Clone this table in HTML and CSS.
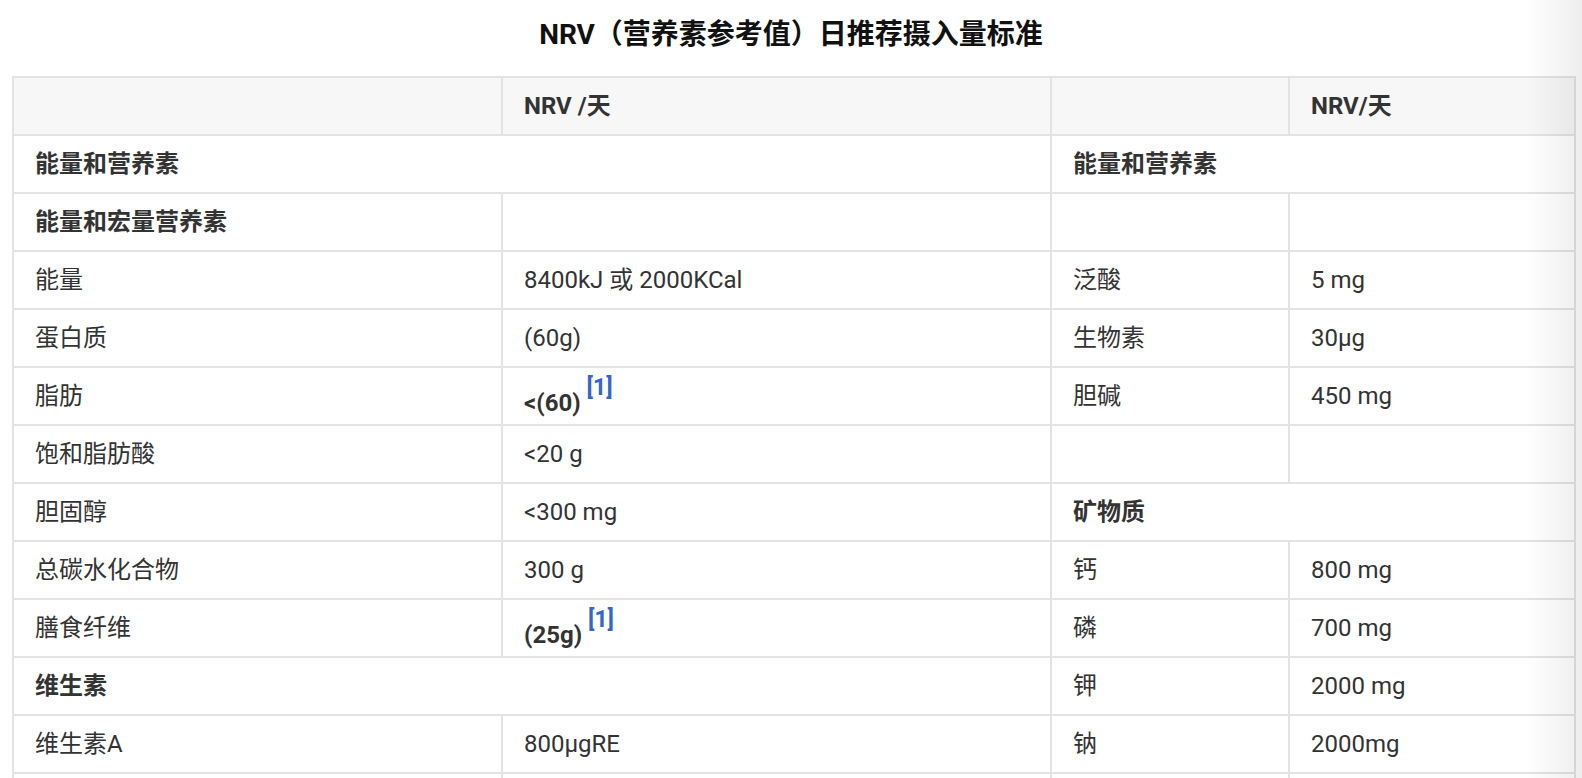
FILE: index.html
```html
<!DOCTYPE html>
<html lang="zh">
<head>
<meta charset="utf-8">
<title>NRV</title>
<link rel="stylesheet" href="styles.css">
</head>
<body>
<div class="page">
  <h1 class="title">NRV（营养素参考值）日推荐摄入量标准</h1>
  <table class="nrv">
    <colgroup>
      <col class="c1"><col class="c2"><col class="c3"><col class="c4">
    </colgroup>
    <thead>
      <tr><th></th><th>NRV /天</th><th></th><th>NRV/天</th></tr>
    </thead>
    <tbody>
      <tr><td class="b" colspan="2">能量和营养素</td><td class="b" colspan="2">能量和营养素</td></tr>
      <tr><td class="b">能量和宏量营养素</td><td></td><td></td><td></td></tr>
      <tr><td>能量</td><td>8400kJ 或 2000KCal</td><td>泛酸</td><td>5 mg</td></tr>
      <tr><td>蛋白质</td><td>(60g)</td><td>生物素</td><td>30μg</td></tr>
      <tr><td>脂肪</td><td class="b">&lt;(60) <sup class="ref">[1]</sup></td><td>胆碱</td><td>450 mg</td></tr>
      <tr><td>饱和脂肪酸</td><td>&lt;20 g</td><td></td><td></td></tr>
      <tr><td>胆固醇</td><td>&lt;300 mg</td><td class="b" colspan="2">矿物质</td></tr>
      <tr><td>总碳水化合物</td><td>300 g</td><td>钙</td><td>800 mg</td></tr>
      <tr><td>膳食纤维</td><td class="b">(25g) <sup class="ref">[1]</sup></td><td>磷</td><td>700 mg</td></tr>
      <tr><td class="b" colspan="2">维生素</td><td>钾</td><td>2000 mg</td></tr>
      <tr><td>维生素A</td><td>800μgRE</td><td>钠</td><td>2000mg</td></tr>
      <tr><td></td><td></td><td></td><td></td></tr>
    </tbody>
  </table>
</div>
</body>
</html>
```

FILE: styles.css
```css
html, body {
  margin: 0;
  padding: 0;
  background: #ffffff;
}

body {
  font-family: Roboto, "Noto Sans CJK SC", sans-serif;
  color: #333333;
  overflow: hidden;
}

body::after {
  content: "";
  position: fixed;
  top: 0;
  right: 0;
  width: 56px;
  height: 100%;
  background: linear-gradient(to right, rgba(0, 0, 0, 0), rgba(0, 0, 0, 0.065));
  pointer-events: none;
}

.page {
  padding-top: 18px;
}

.title {
  margin: 0 0 24px;
  font-size: 28px;
  line-height: 34px;
  font-weight: bold;
  color: #111111;
  text-align: center;
}

.nrv {
  border-collapse: collapse;
  table-layout: fixed;
  width: 1564px;
  margin-left: 12px;
  font-size: 24px;
  line-height: 28px;
}

.c1 { width: 489px; }
.c2 { width: 549px; }
.c3 { width: 238px; }
.c4 { width: 286px; }

.nrv th,
.nrv td {
  border: 2px solid #e3e3e3;
  height: 56px;
  padding: 0 20px 0 21px;
  text-align: left;
  vertical-align: middle;
  white-space: nowrap;
}

.nrv th {
  background: #f7f7f7;
  font-weight: bold;
}

.nrv td.b {
  font-weight: bold;
}

.ref {
  color: #3366cc;
  font-size: 23px;
  font-weight: bold;
  line-height: 1;
  vertical-align: 16px;
}
```
